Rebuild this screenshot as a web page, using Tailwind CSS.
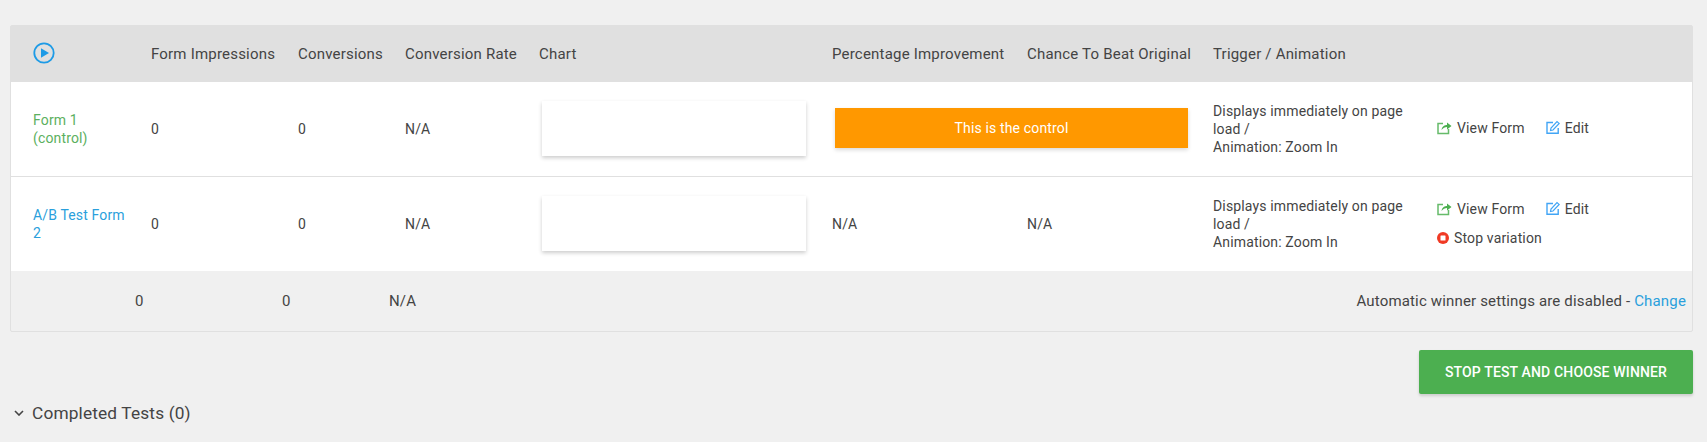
<!DOCTYPE html>
<html lang="en">
<head>
    <meta charset="UTF-8">
    <meta name="viewport" content="width=device-width, initial-scale=1.0">
    <title>A/B Test</title>
    <script src="https://cdn.jsdelivr.net/npm/@tailwindcss/browser@4"></script>
</head>
<body class="bg-[#f0f0f0] font-['Roboto',sans-serif] text-[14px] leading-[18px] tracking-[0.15px] text-[#444] overflow-hidden">
    <div class="pt-[25px] pl-[10px] pr-[14px] h-[442px]">
        <div class="border border-[#e0e0e0] rounded-[2px]">
            <!-- header -->
            <div class="grid grid-cols-[140px_147px_107px_134px_293px_195px_186px_221px_1fr] items-center h-[56px] bg-[#e0e0e0] text-[15px] tracking-[0.2px]">
                <div class="pl-[22px] pb-[3px]">
                    <svg class="w-[22px] h-[22px] block" viewBox="0 0 22 22"><circle cx="11" cy="11" r="9.7" fill="none" stroke="#1e9be6" stroke-width="1.8"/><path d="M8 6.2 L16 11 L8 15.8 Z" fill="#1e9be6"/></svg>
                </div>
                <div>Form Impressions</div>
                <div>Conversions</div>
                <div>Conversion Rate</div>
                <div>Chart</div>
                <div>Percentage Improvement</div>
                <div>Chance To Beat Original</div>
                <div>Trigger / Animation</div>
                <div></div>
            </div>
            <!-- control row -->
            <div class="grid grid-cols-[140px_147px_107px_134px_293px_195px_186px_221px_1fr] items-center h-[95px] pb-[1px] bg-white border-b border-[#e0e0e0]">
                <a class="pl-[22px] pr-[20px] text-[#5cb060]">Form 1 (control)</a>
                <div>0</div>
                <div>0</div>
                <div>N/A</div>
                <div class="pl-[3px]"><div class="w-[264px] h-[55px] bg-white shadow-[0_2px_4px_rgba(0,0,0,0.2)]"></div></div>
                <div class="col-span-2 pl-[3px] pb-[2px]">
                    <div class="w-[353px] h-[40px] flex items-center justify-center bg-[#ff9800] text-white shadow-[0_2px_4px_rgba(0,0,0,0.15)]">This is the control</div>
                </div>
                <div class="pr-[16px]">Displays immediately on page load /<br>Animation: Zoom In</div>
                <div class="flex items-center pl-[3px] pb-[2px]">
                    <svg class="w-[15px] h-[15px] mr-[5px]" viewBox="0 0 15 15"><path d="M11.5 9v4.5h-10.5v-10h5" fill="none" stroke="#66bb6a" stroke-width="1.5"/><path d="M4.5 10 C5 6 8 5 10 5 V2.5 L14.5 6 L10 9.5 V7 C8 7 6 8 4.5 10 Z" fill="#4caf50"/></svg>
                    <span class="mr-[21px]">View Form</span>
                    <svg class="w-[14px] h-[15px] mr-[5px]" viewBox="0 0 14 15"><path d="M12.2 8v5.2H1V2.5h6" fill="none" stroke="#42a5f5" stroke-width="1.4"/><path d="M4.5 10.5 L5 8 L11 1.5 L13.2 3.5 L7 10 Z" fill="none" stroke="#42a5f5" stroke-width="1.2"/></svg>
                    <span>Edit</span>
                </div>
            </div>
            <!-- variation row -->
            <div class="grid grid-cols-[140px_147px_107px_134px_293px_195px_186px_221px_1fr] items-center h-[94px] pb-[1px] bg-white">
                <a class="pl-[22px] pr-[20px] text-[#2a9fdc]">A/B Test Form 2</a>
                <div>0</div>
                <div>0</div>
                <div>N/A</div>
                <div class="pl-[3px]"><div class="w-[264px] h-[55px] bg-white shadow-[0_2px_4px_rgba(0,0,0,0.2)]"></div></div>
                <div>N/A</div>
                <div>N/A</div>
                <div class="pr-[16px]">Displays immediately on page load /<br>Animation: Zoom In</div>
                <div class="pl-[3px] pb-[1px]">
                    <div class="flex items-center">
                        <svg class="w-[15px] h-[15px] mr-[5px]" viewBox="0 0 15 15"><path d="M11.5 9v4.5h-10.5v-10h5" fill="none" stroke="#66bb6a" stroke-width="1.5"/><path d="M4.5 10 C5 6 8 5 10 5 V2.5 L14.5 6 L10 9.5 V7 C8 7 6 8 4.5 10 Z" fill="#4caf50"/></svg>
                        <span class="mr-[21px]">View Form</span>
                        <svg class="w-[14px] h-[15px] mr-[5px]" viewBox="0 0 14 15"><path d="M12.2 8v5.2H1V2.5h6" fill="none" stroke="#42a5f5" stroke-width="1.4"/><path d="M4.5 10.5 L5 8 L11 1.5 L13.2 3.5 L7 10 Z" fill="none" stroke="#42a5f5" stroke-width="1.2"/></svg>
                        <span>Edit</span>
                    </div>
                    <div class="flex items-center mt-[11px]">
                        <svg class="w-[12px] h-[12px] mr-[5px]" viewBox="0 0 12 12"><circle cx="6" cy="6" r="6" fill="#f03a24"/><rect x="3.5" y="3.5" width="5" height="5" rx="0.5" fill="#fff"/></svg>
                        <span>Stop variation</span>
                    </div>
                </div>
            </div>
            <!-- totals -->
            <div class="flex items-center h-[60px] text-[15px] tracking-[0.16px]">
                <div class="w-[124px]"></div>
                <div class="w-[147px]">0</div>
                <div class="w-[107px]">0</div>
                <div>N/A</div>
                <div class="ml-auto pr-[6px]">Automatic winner settings are disabled - <a class="text-[#2a9fdc]">Change</a></div>
            </div>
        </div>
        <div class="flex justify-end mt-[18px]">
            <button class="w-[274px] h-[44px] bg-[#4caf50] text-white font-medium rounded-[2px] shadow-[0_2px_3px_rgba(0,0,0,0.15)]">STOP TEST AND CHOOSE WINNER</button>
        </div>
        <div class="flex items-center mt-[10px] pl-[4px] text-[17.3px]">
            <svg class="w-[10px] h-[6px] mr-[8px]" viewBox="0 0 10 6"><path d="M1 1 L5 5 L9 1" fill="none" stroke="#444" stroke-width="1.6"/></svg>
            <span>Completed Tests (0)</span>
        </div>
    </div>
</body>
</html>
